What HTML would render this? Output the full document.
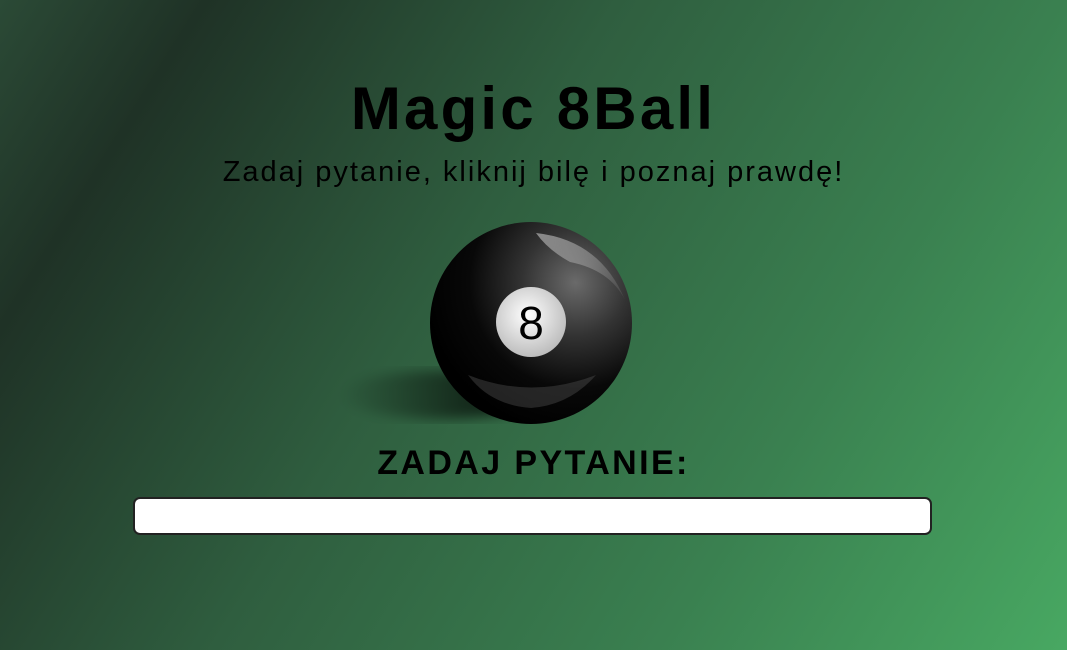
<!DOCTYPE html>
<html><head><meta charset="utf-8"><style>
html,body{margin:0;padding:0;width:1067px;height:650px;overflow:hidden}
body{background:linear-gradient(122deg,#2b4a36 0%,#1f3226 14%,#2f5e3f 42%,#3a8050 72%,#48a862 100%);font-family:"Liberation Sans",sans-serif;color:#000;position:relative}
h1{position:absolute;top:74px;left:0;width:1067px;margin:0;text-align:center;font-size:60px;font-weight:bold;letter-spacing:3.2px}
.sub{position:absolute;top:156px;left:0;width:1067px;text-align:center;font-size:29px;letter-spacing:2px}
.lab{position:absolute;top:444px;left:0;width:1067px;text-align:center;font-size:34px;font-weight:bold;letter-spacing:2.4px}
.inp{position:absolute;left:133px;top:497px;width:795px;height:34px;background:#fff;border:2px solid #222;border-radius:7px}
svg{position:absolute;left:320px;top:210px}
</style></head><body>
<h1>Magic 8Ball</h1>
<div class="sub">Zadaj pytanie, kliknij bilę i poznaj prawdę!</div>
<svg width="330" height="230" viewBox="320 210 330 230">
<defs>
<linearGradient id="sh" x1="0" y1="0" x2="1" y2="0"><stop offset="0" stop-color="#000" stop-opacity="0"/><stop offset="0.6" stop-color="#000" stop-opacity="0.55"/><stop offset="1" stop-color="#000" stop-opacity="0.8"/></linearGradient>
<filter id="bl"><feGaussianBlur stdDeviation="6"/></filter>
<radialGradient id="b" cx="0.72" cy="0.3" r="0.75"><stop offset="0" stop-color="#6a6a6a"/><stop offset="0.35" stop-color="#333"/><stop offset="0.7" stop-color="#080808"/><stop offset="1" stop-color="#000"/></radialGradient>
<radialGradient id="w" cx="0.45" cy="0.4" r="0.6"><stop offset="0" stop-color="#fff"/><stop offset="1" stop-color="#bdbdbd"/></radialGradient>
<linearGradient id="hl" x1="0" y1="0" x2="1" y2="1"><stop offset="0" stop-color="#fff" stop-opacity="0.45"/><stop offset="1" stop-color="#fff" stop-opacity="0.05"/></linearGradient>
</defs>
<ellipse cx="440" cy="395" rx="100" ry="24" fill="url(#sh)" filter="url(#bl)"/>
<circle cx="531" cy="323" r="101" fill="url(#b)"/>
<path d="M536 233 Q600 240 625 300 Q610 270 570 262 Q548 250 536 233Z" fill="url(#hl)"/>
<path d="M468 375 Q531 400 596 375 Q570 405 531 408 Q490 405 468 375Z" fill="#555" opacity="0.4"/>
<circle cx="531" cy="322" r="35" fill="url(#w)"/>
<text x="531" y="339" text-anchor="middle" font-family="Liberation Sans,sans-serif" font-size="46" fill="#000">8</text>
</svg>
<div class="lab">ZADAJ PYTANIE:</div>
<div class="inp"></div>
</body></html>
